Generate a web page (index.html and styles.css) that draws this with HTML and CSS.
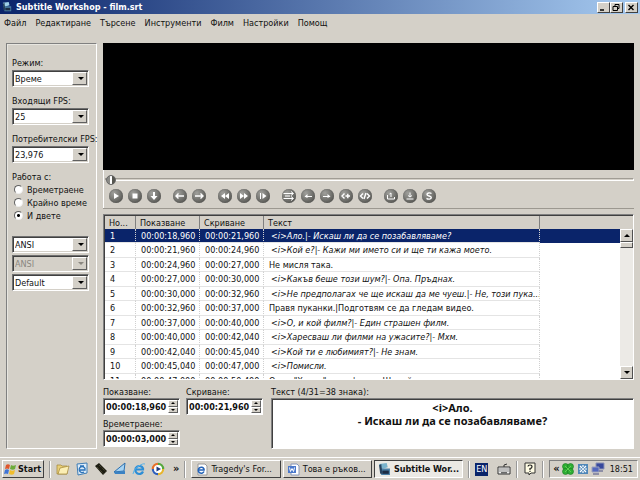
FILE: index.html
```html
<!DOCTYPE html>
<html lang="bg">
<head>
  <meta charset="UTF-8" />
  <meta name="viewport" content="width=device-width, initial-scale=1.0"/>
  <title>Subtitle Workshop - film.srt</title>
  <link rel="stylesheet" href="styles.css">
</head>
<body>

  <!-- TITLE BAR -->
  <header class="title-bar">
    <svg class="app-icon" viewBox="0 0 12 12"><path d="M1 1l7-1 1 4-7 2z" fill="#9ed0e8"/><path d="M2 5h9v6H3z" fill="#4a7fa5"/><path d="M4 7h6v3H4z" fill="#1c2c44"/><path d="M1 2l1 8h2L3 1z" fill="#27425e"/></svg>
    <h1 class="title">Subtitle Workshop - film.srt</h1>
    <div class="window-buttons">
      <button class="win-btn" aria-label="Minimize"><svg viewBox="0 0 10 9"><path d="M2 7h4" stroke="#000" stroke-width="1.5"/></svg></button>
      <button class="win-btn" aria-label="Restore"><svg viewBox="0 0 10 9" fill="none" stroke="#000"><path d="M4 3V1.500h4v4H7"/><path d="M2 3.500h4.500v4H2z"/></svg></button>
      <button class="win-btn close" aria-label="Close"><svg viewBox="0 0 10 9"><path d="M2.500 2l5 5M7.500 2l-5 5" stroke="#000" stroke-width="1.400"/></svg></button>
    </div>
  </header>

  <!-- MENU -->
  <nav class="menu">
    <button>Файл</button>
    <button>Редактиране</button>
    <button>Търсене</button>
    <button>Инструменти</button>
    <button>Филм</button>
    <button>Настройки</button>
    <button>Помощ</button>
  </nav>

  <main class="workspace">
    <!-- LEFT PANEL -->
    <aside class="side-panel">
      <div class="field">
        <label for="mode">Режим:</label>
        <span class="combo"><select id="mode"><option>Време</option></select></span>
      </div>
      <div class="field">
        <label for="fps-in">Входящи FPS:</label>
        <span class="combo"><select id="fps-in"><option>25</option></select></span>
      </div>
      <div class="field">
        <label for="fps-user">Потребителски FPS:</label>
        <span class="combo"><select id="fps-user"><option>23,976</option></select></span>
      </div>
      <fieldset class="work-with">
        <legend>Работа с:</legend>
        <label><input type="radio" name="work">Времетраене</label>
        <label><input type="radio" name="work">Крайно време</label>
        <label><input type="radio" name="work" checked>И двете</label>
      </fieldset>
      <div class="charsets">
        <span class="combo"><select aria-label="Charset 1"><option>ANSI</option></select></span>
        <span class="combo off"><select aria-label="Charset 2" disabled><option>ANSI</option></select></span>
        <span class="combo"><select aria-label="Style"><option>Default</option></select></span>
      </div>
    </aside>

    <div class="content">
      <!-- VIDEO -->
      <section class="player">
        <div class="video"></div>
        <div class="controls">
          <input class="seek" type="range" min="0" max="100" value="0" aria-label="Seek">
          <div class="control-row">
            <div class="group">
              <button aria-label="Play"><svg viewBox="0 0 14 14"><path class="solid" d="M5 4l5 3-5 3z"/></svg></button>
              <button aria-label="Stop"><svg viewBox="0 0 14 14"><path class="solid" d="M4.500 4.500h5v5h-5z"/></svg></button>
              <button aria-label="Jump"><svg viewBox="0 0 14 14"><path class="solid" d="M6 3h2v4h2.500L7 11 3.500 7H6z"/></svg></button>
            </div>
            <div class="group">
              <button aria-label="Previous subtitle"><svg viewBox="0 0 14 14"><path class="bold" d="M11 7H3M5.500 4.500L3 7l2.500 2.500"/></svg></button>
              <button aria-label="Next subtitle"><svg viewBox="0 0 14 14"><path class="bold" d="M3 7h8M8.500 4.500L11 7 8.500 9.500"/></svg></button>
            </div>
            <div class="group">
              <button aria-label="Rewind"><svg viewBox="0 0 14 14"><path class="solid" d="M7 4v6L3 7zM11 4v6L7 7z"/></svg></button>
              <button aria-label="Forward"><svg viewBox="0 0 14 14"><path class="solid" d="M3 4v6l4-3zM7 4v6l4-3z"/></svg></button>
              <button aria-label="Playback rate"><svg viewBox="0 0 14 14"><path d="M4.500 4v6"/><path class="solid" d="M6.500 4v6l4-3z"/></svg></button>
            </div>
            <div class="group">
              <button aria-label="Move subtitle"><svg viewBox="0 0 14 14"><path d="M1.500 4.500H11M1.500 9.500H11M9 2.500l2.500 2-2.500 2M9 7.500l2.500 2-2.500 2M3 7h5"/></svg></button>
              <button aria-label="Set start time"><svg viewBox="0 0 14 14"><path d="M4 7.500h7"/><path class="solid" d="M6.500 5v4L3.500 7.500z"/></svg></button>
              <button aria-label="Set final time"><svg viewBox="0 0 14 14"><path d="M3 7.500h7"/><path class="solid" d="M7.500 5v4l3-1.500z"/></svg></button>
              <button aria-label="Start subtitle"><svg viewBox="0 0 14 14"><path class="bold" d="M5.500 4.500L3 7l2.500 2.500M6.500 7H11M8.800 4.800v4.400"/></svg></button>
              <button aria-label="End subtitle"><svg viewBox="0 0 14 14"><path class="bold" d="M5 4.500L2.500 7 5 9.500M9 4.500L11.500 7 9 9.500M8 4L6 10"/></svg></button>
            </div>
            <div class="group">
              <button aria-label="First sync point"><svg viewBox="0 0 14 14"><path d="M3.500 6v4h7V8M5.500 5l1.500-1v4"/></svg></button>
              <button aria-label="Last sync point"><svg viewBox="0 0 14 14"><path d="M3.500 10h7M7 3.500V8M5 6.500L7 8l2-1.500"/></svg></button>
              <button aria-label="Sync"><svg viewBox="0 0 14 14"><path class="bold" d="M9.500 4.500C8 3.500 5 3.700 5 5.400S9.300 6.900 9.300 8.600 6.300 10.600 4.500 9.400"/></svg></button>
            </div>
          </div>
        </div>
      </section>

      <!-- SUBTITLE LIST -->
      <section class="list-view">
        <table class="subtitles">
          <colgroup><col class="c-num"><col class="c-time"><col class="c-time"><col><col class="c-rest"></colgroup>
          <thead>
            <tr><th>Но...</th><th>Показване</th><th>Скриване</th><th>Текст</th><th></th></tr>
          </thead>
          <tbody>
            <tr class="selected"><td>1</td><td>00:00:18,960</td><td>00:00:21,960</td><td class="it">&lt;i&gt;Ало.|- Искаш ли да се позабавляваме?</td><td></td></tr>
            <tr><td>2</td><td>00:00:21,960</td><td>00:00:24,960</td><td class="it">&lt;i&gt;Кой е?|- Кажи ми името си и ще ти кажа моето.</td><td></td></tr>
            <tr><td>3</td><td>00:00:24,960</td><td>00:00:27,000</td><td>Не мисля така.</td><td></td></tr>
            <tr><td>4</td><td>00:00:27,000</td><td>00:00:30,000</td><td class="it">&lt;i&gt;Какъв беше този шум?|- Опа. Пръднах.</td><td></td></tr>
            <tr><td>5</td><td>00:00:30,000</td><td>00:00:32,960</td><td class="it">&lt;i&gt;Не предполагах че ще искаш да ме чуеш.|- Не, този пука...</td><td></td></tr>
            <tr><td>6</td><td>00:00:32,960</td><td>00:00:37,000</td><td>Правя пуканки.|Подготвям се да гледам видео.</td><td></td></tr>
            <tr><td>7</td><td>00:00:37,000</td><td>00:00:40,000</td><td class="it">&lt;i&gt;О, и кой филм?|- Един страшен филм.</td><td></td></tr>
            <tr><td>8</td><td>00:00:40,000</td><td>00:00:42,040</td><td class="it">&lt;i&gt;Харесваш ли филми на ужасите?|- Мхм.</td><td></td></tr>
            <tr><td>9</td><td>00:00:42,040</td><td>00:00:45,040</td><td class="it">&lt;i&gt;Кой ти е любимият?|- Не знам.</td><td></td></tr>
            <tr><td>10</td><td>00:00:45,040</td><td>00:00:47,000</td><td class="it">&lt;i&gt;Помисли.</td><td></td></tr>
            <tr><td>11</td><td>00:00:47,000</td><td>00:00:50,400</td><td>О, да "Хелоу" - онп |каето Шемуйл утрел. онуи.</td><td></td></tr>
          </tbody>
        </table>
        <div class="scrollbar">
          <button class="up" aria-label="Scroll up"></button>
          <div class="thumb"></div>
          <button class="down" aria-label="Scroll down"></button>
        </div>
      </section>

      <!-- EDITOR -->
      <section class="editor">
        <div class="times">
          <div class="field">
            <label for="show">Показване:</label>
            <span class="spin"><input id="show" type="text" value="00:00:18,960"><span class="arrows"><button class="up" aria-label="Up"></button><button class="down" aria-label="Down"></button></span></span>
          </div>
          <div class="field">
            <label for="hide">Скриване:</label>
            <span class="spin"><input id="hide" type="text" value="00:00:21,960"><span class="arrows"><button class="up" aria-label="Up"></button><button class="down" aria-label="Down"></button></span></span>
          </div>
          <div class="field">
            <label for="duration">Времетраене:</label>
            <span class="spin"><input id="duration" type="text" value="00:00:03,000"><span class="arrows"><button class="up" aria-label="Up"></button><button class="down" aria-label="Down"></button></span></span>
          </div>
        </div>
        <div class="text-field">
          <label for="text">Текст (4/31=38 знака):</label>
          <textarea id="text">&lt;i&gt;Ало.
- Искаш ли да се позабавляваме?</textarea>
        </div>
      </section>
    </div>
  </main>

  <!-- TASKBAR -->
  <footer class="taskbar">
    <button class="start">
      <svg viewBox="0 0 13 12"><path d="M2 2q2-1.500 4 0L5 6Q3 5 1 6z" fill="#e0562c"/><path d="M7 2q2 1.500 5 0l-1 4q-2 1.500-5 0z" fill="#6cab3a"/><path d="M1 7q2-1.500 4 0l-1 4q-2-1-4 0z" fill="#3f74d6"/><path d="M6 7q2 1.500 5 0l-1 4q-2 1.500-5 0z" fill="#f0bd2c"/></svg>
      Start
    </button>
    <span class="divider"></span>
    <div class="quick-launch">
      <a href="#" aria-label="Folder"><svg viewBox="0 0 14 14"><path d="M1 3h4l1 1h5v8H1z" fill="#e9cf79" stroke="#a08434" stroke-width=".7"/><path d="M4 6l9-2-2 8H2z" fill="#fbeeb4" stroke="#a08434" stroke-width=".7"/></svg></a>
      <a href="#" aria-label="Mail"><svg viewBox="0 0 14 14"><path d="M2 2l10-1v10l-9 2z" fill="#dcebf8" stroke="#3f7db5"/><path d="M10 6.500A3 3 0 1 0 9 10M5 8h5V6M5 4l4 0" fill="none" stroke="#2b72b8" stroke-width="1.300"/></svg></a>
      <a href="#" aria-label="Player"><svg viewBox="0 0 14 14"><path d="M1 4l4-3 8 8-4 4z" fill="#1c1c12"/><path d="M3 5l7 7M5 3l7 7" stroke="#595336" stroke-dasharray="1 1"/></svg></a>
      <a href="#" aria-label="Scanner"><svg viewBox="0 0 14 14"><path d="M1 10L12 1l-1 8z" fill="#a6d3f3" stroke="#2c6fae"/><path d="M1 10l11-1v3H2z" fill="#3a82c4"/></svg></a>
      <a href="#" aria-label="Internet Explorer"><svg viewBox="0 0 14 14"><path d="M11 9.500A4 4 0 1 1 11 6.500v1H4" fill="none" stroke="#2e8ed6" stroke-width="2.200"/><path d="M1 12Q1 8 6 4.500T13 2" fill="none" stroke="#5bb4ea"/></svg></a>
      <a href="#" aria-label="Media Player"><svg viewBox="0 0 14 14" fill="none" stroke-width="2.500"><path d="M2 7a5 5 0 0 1 5-5" stroke="#e8702a"/><path d="M7 2a5 5 0 0 1 5 5" stroke="#55a83d"/><path d="M12 7a5 5 0 0 1-5 5" stroke="#e8b52c"/><path d="M7 12a5 5 0 0 1-5-5" stroke="#2e5fbd"/><circle cx="7" cy="7" r="4" fill="#fff" stroke="none"/><path d="M5.500 4.500L10 7 5.500 9.500z" fill="#203a7c" stroke="none"/></svg></a>
    </div>
    <button class="more wide" aria-label="More">»</button>
    <span class="divider"></span>
    <div class="tasks">
      <button class="task"><svg viewBox="0 0 13 13"><path d="M3 1h7l2 2v9H3z" fill="#fff" stroke="#999"/><path d="M9 8.500A3 3 0 1 1 9 6v1H3" fill="none" stroke="#2363b8" stroke-width="1.600"/></svg><span>Tragedy's For...</span></button>
      <button class="task"><svg viewBox="0 0 13 13"><path d="M4 1h6l2 2v9H4z" fill="#fff" stroke="#8796b8"/><path d="M1 3h8v7H1z" fill="#4a78cb"/><path d="M2.500 4.500l1 4 1.500-3 1.500 3 1-4" fill="none" stroke="#fff"/></svg><span>Това е ръков...</span></button>
      <button class="task active"><svg viewBox="0 0 12 12"><path d="M1 1l7-1 1 4-7 2z" fill="#7ab3cc"/><path d="M2 5h9v6H3z" fill="#4a7fa5"/><path d="M4 7h6v3H4z" fill="#1c2c44"/><path d="M1 2l1 8h2L3 1z" fill="#27425e"/></svg><span>Subtitle Wor...</span></button>
    </div>
    <span class="divider"></span>
    <div class="language">
      <button class="lang" aria-label="Language">EN</button>
      <button aria-label="Keyboard"><svg viewBox="0 0 14 14"><path d="M7 5V3l3-1" fill="none" stroke="#333"/><path d="M1 5h12v7H1z" fill="#eee" stroke="#333"/><path d="M2.500 7h9M2.500 9h9" stroke="#333" stroke-dasharray="1 1"/><path d="M4 10.800h6" stroke="#333"/></svg></button>
      <span class="line"></span>
      <button aria-label="Help"><svg viewBox="0 0 14 14"><path d="M2 1h10v10H8l-2 2v-2H2z" fill="#fffce4" stroke="#333"/><path d="M5 4.500Q5 3 7 3t2 1.700T7 6.500V8M7 8.800v1.200" fill="none" stroke="#222" stroke-width="1.200"/></svg></button>
      <span class="line"></span>
    </div>
    <div class="tray">
      <button class="more" aria-label="Show icons">«</button>
      <svg viewBox="0 0 14 14"><g fill="#2fae35" stroke="#127a1b" stroke-width=".6"><circle cx="4.500" cy="4.500" r="3"/><circle cx="9.500" cy="4.500" r="3"/><circle cx="4.500" cy="9.500" r="3"/><circle cx="9.500" cy="9.500" r="3"/></g><path d="M4 4l6 6M10 4l-6 6" stroke="#5fd052"/></svg>
      <svg viewBox="0 0 14 14"><path d="M2 2h10v10H2z" fill="#4f87b9"/><path d="M4 4l2 2M10 4L8 6M4 10l2-2M10 10L8 8M7 3v2M7 9v2M3 7h2M9 7h2" stroke="#fff" stroke-width="1.200"/><circle cx="7" cy="7" r="1" fill="#fff"/></svg>
      <svg viewBox="0 0 14 14"><path d="M5 1h8v6H5z" fill="#37489c" stroke="#8c93b5"/><path d="M1 5h7v5H1z" fill="#5468bd" stroke="#9aa0bd"/><path d="M2 12h6M8 9h4" stroke="#77799a" stroke-width="1.500"/></svg>
      <time>18:51</time>
    </div>
  </footer>
</body>
</html>
```
FILE: styles.css
```css
* {
  box-sizing: border-box;
}

html, body {
  margin: 0;
  height: 100%;
}

body {
  display: flex;
  flex-direction: column;
  overflow: hidden;
  background: #d4d0c8;
  color: #111;
  font-family: "DejaVu Sans Condensed", "DejaVu Sans", sans-serif;
  font-size: 9px;
  line-height: 12px;
}

button, input, select, textarea {
  margin: 0;
  padding: 0;
  border: 0;
  border-radius: 0;
  background: none;
  color: inherit;
  font: inherit;
}

svg {
  display: block;
  flex: none;
}

/* TITLE BAR */
.title-bar {
  display: flex;
  flex: none;
  align-items: center;
  height: 14px;
  padding: 0 2px;
  gap: 4px;
  background: linear-gradient(to right, #0a246a, #a6caf0);
  color: white;
}

.app-icon {
  width: 10px;
  height: 12px;
}

.title {
  flex: 1;
  margin: 0;
  font-size: 9px;
  font-weight: bold;
}

.window-buttons {
  display: flex;
}

.win-btn {
  width: 13px;
  height: 11px;
  background: #d4d0c8;
  border: 1px solid;
  border-color: #fff #404040 #404040 #fff;
}

.win-btn.close {
  margin-left: 2px;
}

.win-btn svg {
  width: 10px;
  height: 9px;
}

/* MENU */
.menu {
  display: flex;
  flex: none;
  gap: 9px;
  padding: 3px 4px;
  height: 29px;
  align-items: flex-start;
}

/* MAIN AREA */
.workspace {
  display: flex;
  flex: 1;
  min-height: 0;
  gap: 6px;
  padding: 0 6px 8px;
}

.side-panel {
  display: flex;
  flex-direction: column;
  flex: none;
  width: 91px;
  padding: 13px 0 0 5px;
  border: 1px solid;
  border-color: #808080 #fff #fff #808080;
  box-shadow: inset 1px 1px #e8e6e0;
  white-space: nowrap;
}

.side-panel .field {
  margin-bottom: 8px;
}

.field label, .text-field label {
  display: block;
}

.combo {
  display: block;
  position: relative;
  width: 77px;
  height: 17px;
  margin-top: 1px;
  background: white;
  border: 1px solid;
  border-color: #707070 #fff #fff #707070;
  box-shadow: inset 1px 1px #404040, inset -1px -1px #d4d0c8;
}

.combo select {
  display: block;
  appearance: none;
  width: 100%;
  height: 100%;
  padding-left: 2px;
  outline: none;
}

/* drop-down button */
.combo::before {
  content: "";
  position: absolute;
  top: 1px;
  right: 1px;
  bottom: 1px;
  width: 13px;
  background: #d4d0c8;
  border: 1px solid;
  border-color: #fff #606060 #606060 #fff;
  pointer-events: none;
}

.combo::after {
  content: "";
  position: absolute;
  top: 6px;
  right: 4px;
  border: 3px solid transparent;
  border-top-color: #000;
  border-bottom: 0;
  pointer-events: none;
}

.combo.off {
  background: #d4d0c8;
  color: #8a8780;
}

.combo.off select {
  opacity: 1;
}

.combo.off::after {
  border-top-color: #8a8780;
}

.work-with {
  display: flex;
  flex-direction: column;
  margin: 0;
  padding: 0;
  border: 0;
}

.work-with legend {
  padding: 0;
}

.work-with label {
  display: flex;
  align-items: center;
  height: 13px;
  gap: 4px;
}

.work-with input {
  appearance: none;
  width: 9px;
  height: 9px;
  margin-left: 2px;
  border: 1px solid;
  border-color: #606060 #eee #eee #606060;
  border-radius: 50%;
  background: white;
}

.work-with input:checked {
  background: radial-gradient(circle, #000 0 1px, #fff 2px);
}

.charsets {
  display: flex;
  flex-direction: column;
  gap: 1px;
  margin-top: 13px;
}

.content {
  display: flex;
  flex: 1;
  flex-direction: column;
  min-width: 0;
}

/* PLAYER */
.player {
  flex: none;
  border-bottom: 1px solid #9c9890;
}

.video {
  height: 127px;
  background: black;
}

.controls {
  padding: 3px 0 5px 1px;
  border-left: 1px solid #fff;
}

.seek {
  display: block;
  appearance: none;
  width: 100%;
  height: 12px;
  outline: none;
}

.seek::-webkit-slider-runnable-track {
  height: 3px;
  background: #d4d0c8;
  border: 1px solid;
  border-color: #a09c94 #fff #fff #a09c94;
}

.seek::-webkit-slider-thumb {
  appearance: none;
  width: 10px;
  height: 10px;
  margin-top: -4px;
  border: 1px solid #666;
  border-radius: 50%;
  background: linear-gradient(to right, #8a8a86 3px, #fff 3px 5px, #55554f 5px);
}

.control-row {
  display: flex;
  gap: 12px;
  padding: 4px 5px 0 4px;
}

.group {
  display: flex;
  gap: 5px;
}

.group button {
  width: 14px;
  height: 14px;
  border-radius: 50%;
  background: radial-gradient(circle at 35% 30%, #a0a09c, #5c5c58 75%);
  box-shadow: inset 0 0 1px #444;
}

.group svg {
  width: 14px;
  height: 14px;
  fill: none;
  stroke: #fff;
}

.group .solid {
  fill: #fff;
  stroke: none;
}

.group .bold {
  stroke-width: 1.400;
}

/* SUBTITLE LIST */
.list-view {
  position: relative;
  flex: 1;
  min-height: 0;
  margin-top: 5px;
  overflow: hidden;
  background: white;
  border: 1px solid;
  border-color: #808080 #fff #fff #808080;
  box-shadow: inset 1px 1px #404040;
  padding: 1px 0 0 1px;
}

.subtitles {
  width: 100%;
  table-layout: fixed;
  border-collapse: separate;
  border-spacing: 0;
  white-space: nowrap;
}

/* the text column takes what is left */
.c-num { width: 31px; }
.c-time { width: 64px; }
.c-rest { width: 93px; }

.subtitles th {
  height: 13px;
  padding: 0 4px;
  background: #d4d0c8;
  border-right: 1px solid #808080;
  font-weight: normal;
  text-align: left;
  overflow: hidden;
}

.subtitles th:last-child {
  border-right: 0;
}

.subtitles td {
  height: 14px;
  padding: 0 0 0 5px;
  border-right: 1px dotted #d0d0d0;
  border-bottom: 1px solid #e4e4e4;
  overflow: hidden;
}

.subtitles tr:nth-child(even) td {
  height: 15px;
}

.subtitles td:last-child {
  border: 0;
}

.subtitles .it {
  padding-left: 7px;
  font-style: italic;
}

.subtitles .selected td {
  background: #0a246a;
  color: white;
}

.scrollbar {
  position: absolute;
  top: 14px;
  right: 0;
  bottom: 0;
  width: 13px;
  display: flex;
  flex-direction: column;
  background: #eceae6;
}

.scrollbar button, .thumb {
  height: 13px;
  background: #d4d0c8;
  border: 1px solid;
  border-color: #fff #505050 #505050 #fff;
}

.thumb {
  height: 6px;
}

.scrollbar .down {
  margin-top: auto;
}

.up, .down {
  display: flex;
  align-items: center;
  justify-content: center;
}

.up::before, .down::before {
  content: "";
  border: 3px solid transparent;
}

.up::before {
  border-top: 0;
  border-bottom-color: #000;
}

.down::before {
  border-bottom: 0;
  border-top-color: #000;
}

/* EDITOR */
.editor {
  display: flex;
  flex: none;
  height: 69px;
  padding-top: 6px;
  gap: 8px;
}

.times {
  display: grid;
  grid-template-columns: 77px 77px;
  column-gap: 6px;
  row-gap: 3px;
  align-content: start;
}

.spin {
  display: flex;
  height: 17px;
  padding: 1px;
  background: white;
  border: 1px solid;
  border-color: #808080 #fff #fff #808080;
  box-shadow: inset 1px 1px #404040;
}

.spin input {
  flex: 1;
  min-width: 0;
  padding-left: 1px;
  font-weight: bold;
}

.arrows {
  display: flex;
  flex-direction: column;
  width: 10px;
}

.arrows button {
  flex: 1;
  background: #d4d0c8;
  border: 1px solid;
  border-color: #fff #606060 #606060 #fff;
}

.arrows button::before {
  border-width: 2px;
}

.arrows .up::before {
  border-top: 0;
}

.arrows .down::before {
  border-bottom: 0;
}

.text-field {
  display: flex;
  flex: 1;
  flex-direction: column;
}

.text-field textarea {
  flex: 1;
  resize: none;
  padding: 2px;
  background: white;
  border: 1px solid;
  border-color: #808080 #fff #fff #808080;
  box-shadow: inset 1px 1px #404040;
  font-family: "Noto Sans", sans-serif;
  font-size: 11px;
  font-weight: bold;
  line-height: 13px;
  text-align: center;
  overflow: hidden;
  outline: none;
}

/* TASKBAR */
.taskbar {
  display: flex;
  flex: none;
  align-items: center;
  height: 23px;
  padding: 0 2px;
  gap: 5px;
  border-top: 1px solid #fff;
}

.start {
  display: flex;
  align-items: center;
  gap: 1px;
  width: 42px;
  height: 18px;
  padding-left: 1px;
  border: 1px solid;
  border-color: #fff #404040 #404040 #fff;
  font-weight: bold;
}

.start svg {
  width: 13px;
  height: 12px;
}

.divider, .line {
  flex: none;
  width: 2px;
  height: 17px;
  border-left: 1px solid #999;
  border-right: 1px solid #fff;
}

.quick-launch {
  display: flex;
  gap: 5px;
}

.quick-launch svg, .language svg, .tray svg {
  width: 14px;
  height: 14px;
}

.more {
  font-size: 11px;
  font-weight: bold;
}

.more.wide {
  padding-left: 3px;
}

.tasks {
  display: flex;
  flex: 1;
  gap: 2px;
  min-width: 0;
}

.task {
  display: flex;
  flex: 1;
  align-items: center;
  gap: 3px;
  height: 18px;
  padding: 0 3px;
  border: 1px solid;
  border-color: #fff #404040 #404040 #fff;
  white-space: nowrap;
}

.task svg {
  width: 13px;
  height: 13px;
}

.task.active {
  background: #ebe9e4;
  border-color: #404040 #fff #fff #404040;
  font-weight: bold;
}

.language {
  display: flex;
  align-items: center;
  gap: 5px;
}

.lang {
  width: 13px;
  height: 13px;
  margin-right: 4px;
  background: #0a246a;
  color: white;
}

.tray {
  display: flex;
  align-items: center;
  gap: 1px;
  height: 18px;
  padding: 0 4px 0 3px;
  border: 1px solid;
  border-color: #808080 #fff #fff #808080;
}

.tray time {
  margin-left: 4px;
}
```
